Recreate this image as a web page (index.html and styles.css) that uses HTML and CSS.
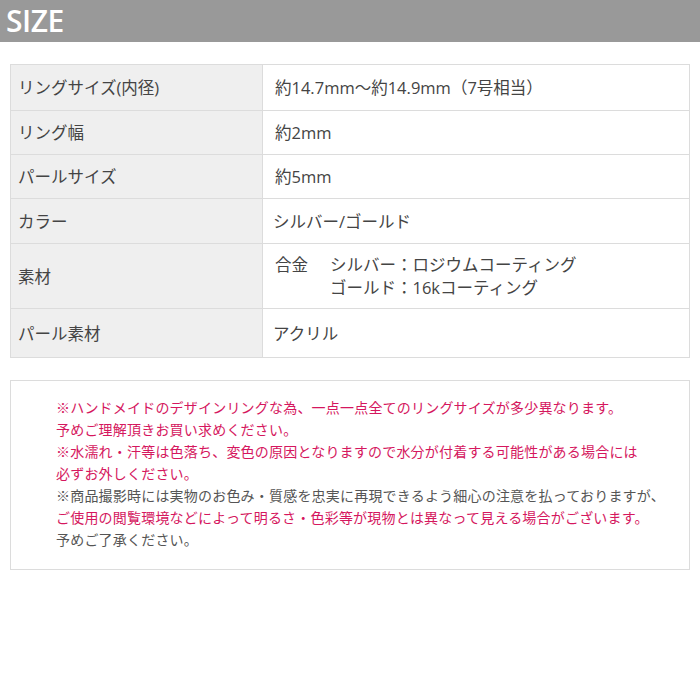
FILE: index.html
```html
<!DOCTYPE html>
<html lang="ja">
<head>
<meta charset="utf-8">
<link rel="stylesheet" href="styles.css">
</head>
<body>
<header class="head"><h1 class="head-title">SIZE</h1></header>
<main class="content">
<table class="spec">
<tr class="r1"><th>リングサイズ(内径)</th><td class="v">約14.7mm〜約14.9mm（7号相当）</td></tr>
<tr class="r2"><th>リング幅</th><td class="v">約2mm</td></tr>
<tr class="r3"><th>パールサイズ</th><td class="v">約5mm</td></tr>
<tr class="r4"><th>カラー</th><td class="v2">シルバー/ゴールド</td></tr>
<tr class="r5"><th>素材</th><td class="v"><div class="mat"><span class="mat-k">合金</span><span class="mat-v">シルバー：ロジウムコーティング<br>ゴールド：16kコーティング</span></div></td></tr>
<tr class="r6"><th>パール素材</th><td class="v2">アクリル</td></tr>
</table>
<div class="notes">
<p class="pink">※ハンドメイドのデザインリングな為、一点一点全てのリングサイズが多少異なります。<br>予めご理解頂きお買い求めください。</p>
<p class="pink">※水濡れ・汗等は色落ち、変色の原因となりますので水分が付着する可能性がある場合には<br>必ずお外しください。</p>
<p class="gray">※商品撮影時には実物のお色み・質感を忠実に再現できるよう細心の注意を払っておりますが、</p>
<p class="pink">ご使用の閲覧環境などによって明るさ・色彩等が現物とは異なって見える場合がございます。</p>
<p class="gray">予めご了承ください。</p>
</div>
</main>
</body>
</html>
```
FILE: styles.css
```css
html, body { margin: 0; padding: 0; background: #fff; }
body { font-family: "Open Sans", "Noto Sans CJK JP", sans-serif; color: #444; }
.head { height: 42px; background: #999999; display: flex; align-items: center; padding-left: 6px; }
.head-title { margin: 0; color: #fff; font-family: "Open Sans", sans-serif; font-weight: 600; font-size: 30px; line-height: 42px; letter-spacing: -0.5px; }
.content { padding: 22px 10px 0 10px; width: 680px; }
.spec { width: 680px; border-collapse: collapse; font-size: 16.5px; line-height: 23px; }
.spec th, .spec td { border: 1px solid #dcdcdc; text-align: left; font-weight: 400; vertical-align: middle; }
.spec th { width: 244px; background: #efefef; padding: 0 0 0 7px; color: #444; }
.spec td.v { padding: 0 0 0 12px; }
.spec td.v2 { padding: 0 0 0 10px; }
.r1 { height: 46px; }
.r2 { height: 44px; }
.r3 { height: 44px; }
.r4 { height: 45px; }
.r5 { height: 65px; }
.r6 { height: 49px; }
.mat { display: flex; gap: 22px; }
.notes { margin-top: 22px; border: 1px solid #dcdcdc; padding: 16px 10px 21px 45px; font-size: 14px; line-height: 22px; height: 151px; }
.notes p { margin: 0; letter-spacing: 0.2px; }
.pink { color: #d5175e; }
.gray { color: #555; }
```
